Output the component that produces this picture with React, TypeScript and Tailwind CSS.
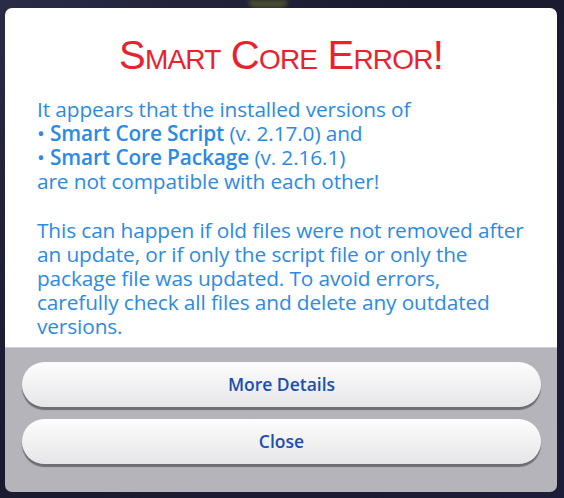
import React from "react";

export default function App() {
  return (
    <div className="relative w-[564px] h-[498px] overflow-hidden bg-[#1b1c33]" style={{ fontFamily: '"Open Sans", sans-serif' }}>
      <div className="absolute inset-0 bg-[linear-gradient(135deg,#2a2b45_0%,#1a1b30_40%,#1c1d36_100%)]" />
      <div className="absolute left-[248px] top-0 w-[40px] h-[8px] bg-[#4a4d2e] rounded-b-full blur-[2px]" />
      <div className="absolute left-[5px] top-[8px] w-[552px] h-[484px] rounded-[7px] overflow-hidden flex flex-col">
        <div className="bg-white h-[339px] flex flex-col px-[32px]">
          <h1
            className="mt-[29px] text-center text-[#e8222f] text-[40px] leading-[36px] tracking-[-0.8px]"
            style={{ fontVariant: "small-caps", fontFamily: '"Liberation Sans", sans-serif' }}
          >
            Smart Core Error!
          </h1>
          <div className="mt-[24px] text-[#2b8ae4] text-[20.8px] leading-[24px] tracking-[-0.1px] whitespace-nowrap">
            <p>It appears that the installed versions of</p>
            <p>
              • <span className="font-semibold">Smart Core Script</span> (v. 2.17.0) and
            </p>
            <p>
              • <span className="font-semibold">Smart Core Package</span> (v. 2.16.1)
            </p>
            <p>are not compatible with each other!</p>
            <p className="mt-[25px]">
              This can happen if old files were not removed after
              <br />
              an update, or if only the script file or only the
              <br />
              package file was updated. To avoid errors,
              <br />
              carefully check all files and delete any outdated
              <br />
              versions.
            </p>
          </div>
        </div>
        <div className="flex-1 bg-[#b5b4bb] border-t border-[#cfcfd4] px-[17px] pt-[14px] flex flex-col gap-[12px]">
          <button className="h-[45px] w-[519px] rounded-full bg-[linear-gradient(#fdfdfd,#e6e6e8)] shadow-[0_3px_1px_#6e6d73] text-[#1b4fae] text-[17.5px] font-semibold">
            More Details
          </button>
          <button className="h-[45px] w-[519px] rounded-full bg-[linear-gradient(#fdfdfd,#e6e6e8)] shadow-[0_3px_1px_#6e6d73] text-[#1b4fae] text-[17.5px] font-semibold">
            Close
          </button>
        </div>
      </div>
    </div>
  );
}
